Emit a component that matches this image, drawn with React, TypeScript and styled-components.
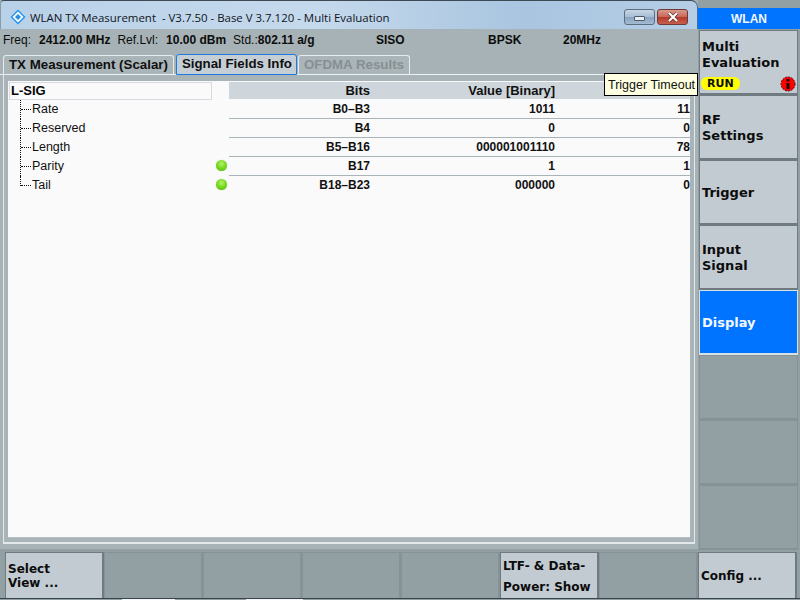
import React from 'react';
import styled, { createGlobalStyle } from 'styled-components';

const GlobalStyle = createGlobalStyle`
  html, body {
    margin: 0;
    padding: 0;
    background: #919ea2;
  }
`;

const Screen = styled.div`
  width: 800px;
  height: 600px;
  overflow: hidden;
  position: relative;
  display: grid;
  grid-template-columns: 698px 102px;
  grid-template-rows: 552px 46px 2px;
  background: #929fa3;
  font-family: 'Liberation Sans', Arial, sans-serif;
  color: #000;
`;

const Window = styled.div`
  display: flex;
  flex-direction: column;
  background: #a6b2b5;
  height: 549px;
`;

const TitleBar = styled.div`
  height: 29px;
  box-sizing: border-box;
  display: flex;
  align-items: center;
  padding: 0 9px 0 9px;
  border-top: 1px solid #3d4a55;
  border-left: 1px solid #8d9aa6;
  border-right: 1px solid #3f6f9c;
  border-radius: 4px 7px 0 0;
  background: linear-gradient(to right, #b9d1e8 0%, #c5d9ec 45%, #a9c5e0 75%, #b5cee6 100%);
`;

const LogoBox = styled.div`
  display: flex;
  margin-top: 3px;
`;

const TitleText = styled.div`
  font-family: 'Open Sans', 'Noto Sans', sans-serif;
  font-size: 11.45px;
  margin: 4px 0 0 4px;
  flex: 1;
  white-space: pre;
  color: #10141c;
`;

const WinButton = styled.div<{ $close?: boolean }>`
  box-sizing: border-box;
  width: 31px;
  height: 16px;
  margin-left: ${(p) => (p.$close ? 2 : 0)}px;
  margin-top: 4px;
  border: 1px solid ${(p) => (p.$close ? '#6d3a34' : '#5d6d80')};
  border-radius: 3px;
  display: flex;
  align-items: center;
  justify-content: center;
  background: ${(p) =>
    p.$close
      ? 'linear-gradient(to bottom, #d99a8e 0%, #c9685a 48%, #b4392a 52%, #c8604e 100%)'
      : 'linear-gradient(to bottom, #c8d6e6 0%, #a9bdd4 48%, #8aa3c0 52%, #a5bbd4 100%)'};
`;

const MinGlyph = styled.div`
  width: 9px;
  height: 3px;
  margin-top: 2px;
  background: #e8eef4;
  border: 1px solid #4d5b6a;
  border-radius: 1px;
`;

const InfoBar = styled.div`
  height: 24px;
  display: grid;
  grid-template-columns: 373px 112px 75px 1fr;
  align-items: center;
  padding: 0 0 3px 3px;
  box-sizing: border-box;
  font-size: 12px;
  white-space: pre;
  color: #0c0c0c;
`;

const InfoGroup = styled.div`
  display: flex;
`;

const Strong = styled.b<{ $gap?: number }>`
  font-weight: 700;
  margin-left: ${(p) => p.$gap ?? 0}px;
`;

const InfoLabel = styled.span<{ $gap?: number }>`
  margin-left: ${(p) => p.$gap ?? 0}px;
`;

const Tabs = styled.div`
  height: 21px;
  display: flex;
  align-items: flex-end;
  padding-left: 3px;
  border-bottom: 1px solid #eef2f3;
`;

const Tab = styled.div<{ $active?: boolean; $disabled?: boolean }>`
  box-sizing: border-box;
  height: ${(p) => (p.$active ? 21 : 19)}px;
  padding: 0 ${(p) => (p.$active ? 4 : 5)}px 0 5px;
  margin-bottom: ${(p) => (p.$active ? -1 : 0)}px;
  margin-right: ${(p) => (p.$active ? 1 : 2)}px;
  font-size: 13.3px;
  font-weight: 700;
  line-height: 18px;
  white-space: nowrap;
  color: ${(p) => (p.$disabled ? '#878f92' : '#101010')};
  background: ${(p) => (p.$active ? '#c5ced5' : '#aab5b9')};
  border: 1px solid ${(p) => (p.$active ? '#1b7be0' : '#e6ebec')};
  border-bottom: ${(p) => (p.$active ? '1px solid #1b7be0' : 'none')};
  border-radius: 3px 3px 0 0;
`;

const Frame = styled.div`
  flex: 1;
  margin: 0 3px 5px 3px;
  padding: 6px 5px 4px 4px;
  background: #a9b4b8;
  border: 1px solid #e3e8ea;
  border-top: none;
  border-bottom-width: 2px;
  display: flex;
`;

const Content = styled.div`
  flex: 1;
  background: #fafafa;
  padding: 1px 0 0 1px;
  display: grid;
  grid-template-columns: 220px 1fr;
  align-content: start;
  border-bottom: 1px solid #b4bec2;
`;

const Tree = styled.div`
  display: flex;
  flex-direction: column;
`;

const TreeRoot = styled.div`
  box-sizing: border-box;
  height: 18px;
  width: 203px;
  border: 1px solid #d5dbe0;
  font-size: 13px;
  font-weight: 700;
  line-height: 16px;
  padding-left: 1px;
  color: #050505;
`;

const TreeRow = styled.div<{ $last?: boolean }>`
  position: relative;
  height: 19px;
  line-height: 19px;
  font-size: 12.5px;
  padding: 0 2px 0 23px;
  color: #111;
  display: flex;
  justify-content: space-between;
  &::before {
    content: '';
    position: absolute;
    left: 11px;
    top: 0;
    height: ${(p) => (p.$last ? 10 : 19)}px;
    border-left: 1px dotted #111;
  }
  &::after {
    content: '';
    position: absolute;
    left: 12px;
    top: 9px;
    width: 10px;
    border-top: 1px dotted #111;
  }
`;

const Led = styled.span`
  width: 11px;
  height: 11px;
  border-radius: 50%;
  margin-top: 3px;
  background: radial-gradient(circle at 50% 35%, #b4f26a 0%, #74d81a 50%, #53b010 100%);
  box-shadow: 0 0 1px #9fc48a;
`;

const Table = styled.div`
  display: flex;
  flex-direction: column;
`;

const TableRow = styled.div<{ $head?: boolean; $last?: boolean }>`
  display: grid;
  grid-template-columns: 141px 185px 135px;
  height: ${(p) => (p.$head ? 18 : 19)}px;
  line-height: ${(p) => (p.$head ? 17 : 18)}px;
  box-sizing: border-box;
  font-size: ${(p) => (p.$head ? 13 : 12)}px;
  font-weight: 700;
  background: ${(p) => (p.$head ? '#ced5db' : 'transparent')};
  border-bottom: 1px solid ${(p) => (p.$head ? '#fafafa' : p.$last ? 'transparent' : '#a9b4b8')};
  color: #111;
`;

const Cell = styled.div`
  text-align: right;
  white-space: nowrap;
`;

const Side = styled.div`
  grid-row: 1;
  grid-column: 2;
  display: flex;
  flex-direction: column;
`;

const SideHead = styled.div`
  height: 21px;
  margin-top: 8px;
  margin-bottom: 1px;
  background: #0074ff;
  color: #f2f6ff;
  font-size: 12px;
  font-weight: 700;
  line-height: 23px;
  text-align: center;
`;

const SoftKey = styled.div<{ $state?: 'on' | 'off' | 'active' }>`
  box-sizing: border-box;
  height: 65px;
  margin-left: 1px;
  margin-right: 2px;
  padding: 2px 2px 0;
  font-family: 'DejaVu Sans', Verdana, sans-serif;
  font-size: 13px;
  font-weight: 700;
  line-height: 16px;
  display: flex;
  flex-direction: column;
  justify-content: center;
  position: relative;
  color: ${(p) => (p.$state === 'active' ? '#f4f8ff' : '#0c0c0c')};
  background: ${(p) =>
    p.$state === 'active' ? '#0074ff' : p.$state === 'off' ? '#929fa3' : '#c3cbd2'};
  border: 1px solid
    ${(p) =>
      p.$state === 'active' ? '#d8e0e4' : p.$state === 'off' ? '#859296' : '#6f7b80'};
  border-bottom-width: 2px;
`;

const KeyStatus = styled.div`
  display: flex;
  align-items: center;
  justify-content: space-between;
  margin: 5px -1px -4px -1px;
`;

const RunBadge = styled.span`
  background: #ffff00;
  border-radius: 6px;
  font-size: 11px;
  line-height: 13px;
  padding: 0 6px;
`;

const ToolTip = styled.div`
  position: absolute;
  left: 604px;
  top: 73px;
  width: 94px;
  height: 23px;
  box-sizing: border-box;
  border: 1px solid #000;
  background: #ffffe1;
  font-size: 12.5px;
  line-height: 22px;
  padding-left: 3px;
  white-space: nowrap;
  color: #111;
  z-index: 2;
`;

const BottomBar = styled.div`
  grid-row: 2;
  grid-column: 1 / 3;
  display: grid;
  grid-template-columns: repeat(8, 99px);
  padding-left: 5px;
`;

const BottomKey = styled.div<{ $on?: boolean; $tall?: boolean }>`
  box-sizing: border-box;
  height: 46px;
  padding: ${(p) => (p.$tall ? 2 : 0)}px 0 0 2px;
  font-family: 'DejaVu Sans', Verdana, sans-serif;
  font-size: 12px;
  font-weight: 700;
  line-height: ${(p) => (p.$tall ? 21 : 14)}px;
  display: flex;
  flex-direction: column;
  justify-content: center;
  white-space: nowrap;
  color: #0c0c0c;
  background: ${(p) => (p.$on ? '#c3cbd2' : '#929fa3')};
  border: 1px solid ${(p) => (p.$on ? '#6f7b80' : '#859296')};
  border-bottom: none;
  border-right-width: 2px;
`;

const TaskStrip = styled.div`
  grid-row: 3;
  grid-column: 1 / 3;
  display: flex;
  justify-content: flex-start;
  padding: 0 15px 0 122px;
  gap: 71px;
  background: #929fa3;
  border-top: 1px solid #39454c;
  box-sizing: border-box;
`;

const TaskItem = styled.div<{ $width: number }>`
  width: ${(p) => p.$width}px;
  height: 1px;
  background: #f5f5f5;
`;

const InfoIcon = () => (
  <svg width="16" height="16" viewBox="0 0 16 16">
    <circle cx="8" cy="8" r="7" fill="#f00" stroke="#600" strokeDasharray="2 1" />
    <rect x="6.5" y="7" width="3" height="6" fill="#200" />
    <rect x="6.5" y="3" width="3" height="2.5" fill="#200" />
  </svg>
);

const AppLogo = () => (
  <svg width="16" height="16" viewBox="0 0 16 16">
    <path d="M8 0.5 L15.5 8 L8 15.5 L0.5 8 Z" fill="#1f93f7" />
    <path d="M8 2.5 L13.5 8 L8 13.5 L2.5 8 Z" fill="#fff" />
    <path d="M8 5 L11 8 L8 11 L5 8 Z" fill="#2a8ee0" />
  </svg>
);

const CloseGlyph = () => (
  <svg width="12" height="10" viewBox="0 0 12 10">
    <path d="M2 1 L10 9 M10 1 L2 9" stroke="#5a2a26" strokeWidth="3.4" />
    <path d="M2 1 L10 9 M10 1 L2 9" stroke="#fff" strokeWidth="2.2" />
  </svg>
);

const fields = [
  { name: 'Rate', bits: 'B0\u2013B3', binary: '1011', value: '11' },
  { name: 'Reserved', bits: 'B4', binary: '0', value: '0' },
  { name: 'Length', bits: 'B5\u2013B16', binary: '000001001110', value: '78' },
  { name: 'Parity', bits: 'B17', binary: '1', value: '1', led: true },
  { name: 'Tail', bits: 'B18\u2013B23', binary: '000000', value: '0', led: true }
];

const App: React.FC = () => {
  return (
    <Screen>
      <GlobalStyle />
      <Window>
        <TitleBar>
          <LogoBox>
            <AppLogo />
          </LogoBox>
          <TitleText>WLAN TX Measurement  - V3.7.50 - Base V 3.7.120 - Multi Evaluation</TitleText>
          <WinButton>
            <MinGlyph />
          </WinButton>
          <WinButton $close>
            <CloseGlyph />
          </WinButton>
        </TitleBar>
        <InfoBar>
          <InfoGroup>
            <span>Freq:</span>
            <Strong $gap={8}>2412.00 MHz</Strong>
            <InfoLabel $gap={7}>Ref.Lvl:</InfoLabel>
            <Strong $gap={8}>10.00 dBm</Strong>
            <InfoLabel $gap={7}>Std.:</InfoLabel>
            <Strong>802.11 a/g</Strong>
          </InfoGroup>
          <Strong>SISO</Strong>
          <Strong>BPSK</Strong>
          <Strong>20MHz</Strong>
        </InfoBar>
        <Tabs>
          <Tab>TX Measurement (Scalar)</Tab>
          <Tab $active>Signal Fields Info</Tab>
          <Tab $disabled>OFDMA Results</Tab>
        </Tabs>
        <Frame>
          <Content>
            <Tree>
              <TreeRoot>L-SIG</TreeRoot>
              {fields.map((f, i) => (
                <TreeRow key={f.name} $last={i === fields.length - 1}>
                  {f.name}
                  {f.led && <Led />}
                </TreeRow>
              ))}
            </Tree>
            <Table>
              <TableRow $head>
                <Cell>Bits</Cell>
                <Cell>Value [Binary]</Cell>
                <Cell />
              </TableRow>
              {fields.map((f, i) => (
                <TableRow key={f.name} $last={i === fields.length - 1}>
                  <Cell>{f.bits}</Cell>
                  <Cell>{f.binary}</Cell>
                  <Cell>{f.value}</Cell>
                </TableRow>
              ))}
            </Table>
          </Content>
        </Frame>
      </Window>
      <Side>
        <SideHead>WLAN</SideHead>
        <SoftKey>
          <span>Multi</span>
          <span>Evaluation</span>
          <KeyStatus>
            <RunBadge>RUN</RunBadge>
            <InfoIcon />
          </KeyStatus>
        </SoftKey>
        <SoftKey>
          <span>RF</span>
          <span>Settings</span>
        </SoftKey>
        <SoftKey>Trigger</SoftKey>
        <SoftKey>
          <span>Input</span>
          <span>Signal</span>
        </SoftKey>
        <SoftKey $state="active">Display</SoftKey>
        <SoftKey $state="off" />
        <SoftKey $state="off" />
        <SoftKey $state="off" />
      </Side>
      <BottomBar>
        <BottomKey $on>
          <span>Select</span>
          <span>View ...</span>
        </BottomKey>
        <BottomKey />
        <BottomKey />
        <BottomKey />
        <BottomKey />
        <BottomKey $on $tall>
          <span>LTF- &amp; Data-</span>
          <span>Power: Show</span>
        </BottomKey>
        <BottomKey />
        <BottomKey $on>Config ...</BottomKey>
      </BottomBar>
      <TaskStrip>
        <TaskItem $width={53} />
        <TaskItem $width={57} />
      </TaskStrip>
      <ToolTip>Trigger Timeout</ToolTip>
    </Screen>
  );
};

export default App;
